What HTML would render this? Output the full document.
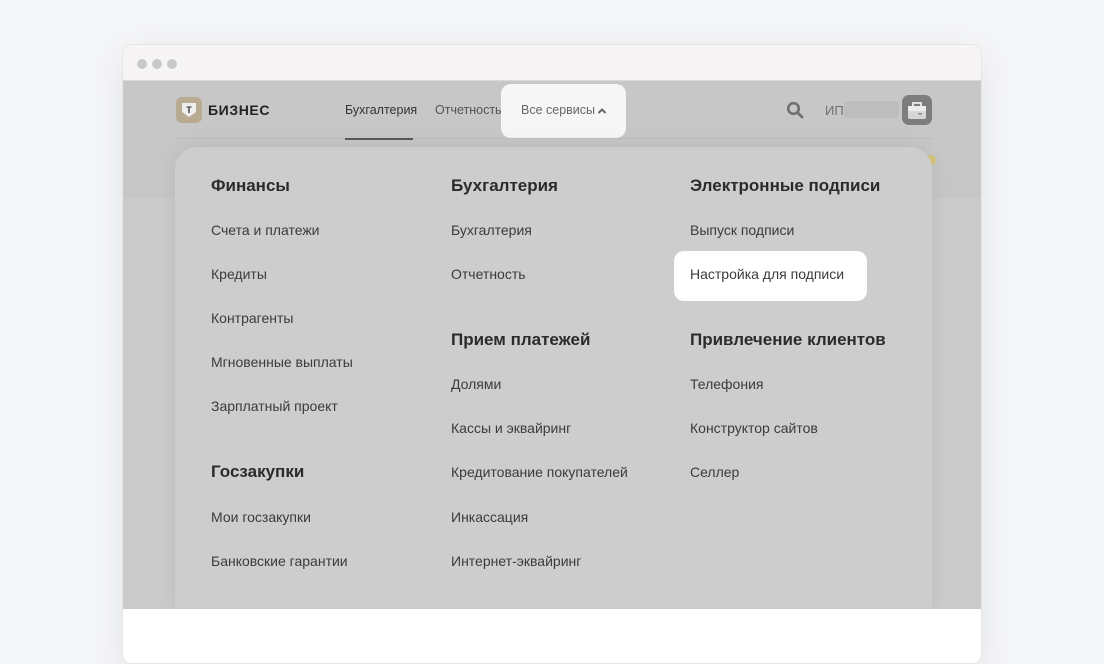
<!DOCTYPE html>
<html><head><meta charset="utf-8">
<style>
*{margin:0;padding:0;box-sizing:border-box}
body{width:1104px;height:652px;background:#f5f6f8;position:relative;overflow:hidden;font-family:"Liberation Sans","Noto Sans CJK SC",sans-serif}
.win{position:absolute;left:122px;top:44px;width:860px;height:620px;border-radius:10px;background:#fff;border:1px solid #e6e6e8;box-shadow:0 10px 40px rgba(0,0,0,.08);overflow:hidden}
.bar{position:absolute;left:0;top:0;width:100%;height:36px;background:#f6f4f4;border-bottom:1px solid #d8d8d8}
.dot{position:absolute;top:14px;width:10px;height:10px;border-radius:50%;background:#c9c9c9}
.gray{position:absolute;left:0;top:36px;width:100%;height:528px;background:#cbcbcb;overflow:hidden}
.hdr{position:absolute;left:0;top:0;width:100%;height:117px;background:#c6c7c6}
.line{position:absolute;left:52px;top:57px;width:757px;height:1px;background:#bdbdbd}
.a{position:absolute;white-space:nowrap}
.panel{position:absolute;left:52px;top:66px;width:757px;height:462px;background:#cdcdcd;border-radius:22px 22px 0 0;box-shadow:0 0 20px rgba(0,0,0,.08)}
.t{position:absolute;left:-1px;top:-2px;width:100%;height:100%}
.h{position:absolute;font-size:17px;font-weight:bold;color:#2b2b2b;white-space:nowrap}
.i{position:absolute;font-size:14px;color:#3b3b3b;white-space:nowrap}
</style></head><body>
<div class="win">
 <div class="bar"><div class="dot" style="left:14px"></div><div class="dot" style="left:29px"></div><div class="dot" style="left:44px"></div></div>
 <div class="gray">
  <div class="hdr"></div>
  <div class="line"></div>
  <div class="a" style="left:222px;top:57px;width:68px;height:2px;background:#5a5a5a"></div>
  <div class="a" style="left:53px;top:16px;width:26px;height:26px;border-radius:6px;background:#b8ab91"></div>
  <svg class="a" style="left:57px;top:20px" width="18" height="18" viewBox="0 0 18 18"><path d="M2 2h14v9l-7 5-7-5z" fill="#eeeeee"/><text x="9" y="12" font-size="9" font-weight="bold" text-anchor="middle" fill="#333" font-family="Liberation Sans">T</text></svg>
  <div class="a" style="left:85px;top:21px;font-size:14px;font-weight:900;color:#222;letter-spacing:.6px">БИЗНЕС</div>
  <div class="a" style="left:222px;top:22px;font-size:12.5px;color:#333">Бухгалтерия</div>
  <div class="a" style="left:312px;top:22px;font-size:12.5px;color:#555">Отчетность</div>
  <div class="a" style="left:378px;top:3px;width:125px;height:54px;border-radius:10px;background:#f6f6f7"></div>
  <div class="a" style="left:398px;top:22px;font-size:12.5px;color:#666">Все сервисы</div>
  <svg class="a" style="left:474px;top:26px" width="10" height="8" viewBox="0 0 10 8"><path d="M1.5 6L5 2.5 8.5 6" stroke="#666" stroke-width="2" fill="none"/></svg>
  <svg class="a" style="left:663px;top:20px" width="18" height="18" viewBox="0 0 18 18"><circle cx="7.5" cy="7.5" r="5.3" stroke="#707070" stroke-width="2.6" fill="none"/><path d="M11.5 11.5L16 16" stroke="#707070" stroke-width="2.8" stroke-linecap="round"/></svg>
  <div class="a" style="left:702px;top:22px;font-size:13px;color:#707070">ИП</div>
  <div class="a" style="left:721px;top:20px;width:55px;height:17px;border-radius:4px;background:#bdbdbe"></div>
  <div class="a" style="left:779px;top:14px;width:30px;height:30px;border-radius:7px;background:#7d7d7d"></div>
  <svg class="a" style="left:783px;top:18px" width="22" height="22" viewBox="0 0 22 22"><path d="M7 7V4h8v3" stroke="#e0e0e0" stroke-width="2" fill="none"/><rect x="2" y="7" width="18" height="13" rx="2" fill="#d6d6d6"/><rect x="2" y="7" width="18" height="5" fill="#ececec"/><rect x="12" y="14" width="4" height="1.5" fill="#8a8a8a"/></svg>
  <div class="a" style="left:803px;top:74px;width:10px;height:10px;border-radius:50%;background:#d8c77a"></div>
  <div class="panel">
   <div class="a" style="left:499px;top:104px;width:193px;height:50px;border-radius:10px;background:#fff"></div>
   <div class="t">
   <div class="h" style="left:37px;top:31px">Финансы</div>
   <div class="i" style="left:37px;top:77px">Счета и платежи</div>
   <div class="i" style="left:37px;top:121px">Кредиты</div>
   <div class="i" style="left:37px;top:165px">Контрагенты</div>
   <div class="i" style="left:37px;top:209px">Мгновенные выплаты</div>
   <div class="i" style="left:37px;top:253px">Зарплатный проект</div>
   <div class="h" style="left:37px;top:317px">Госзакупки</div>
   <div class="i" style="left:37px;top:364px">Мои госзакупки</div>
   <div class="i" style="left:37px;top:408px">Банковские гарантии</div>

   <div class="h" style="left:277px;top:31px">Бухгалтерия</div>
   <div class="i" style="left:277px;top:77px">Бухгалтерия</div>
   <div class="i" style="left:277px;top:121px">Отчетность</div>
   <div class="h" style="left:277px;top:185px">Прием платежей</div>
   <div class="i" style="left:277px;top:231px">Долями</div>
   <div class="i" style="left:277px;top:275px">Кассы и эквайринг</div>
   <div class="i" style="left:277px;top:319px">Кредитование покупателей</div>
   <div class="i" style="left:277px;top:364px">Инкассация</div>
   <div class="i" style="left:277px;top:408px">Интернет-эквайринг</div>

   <div class="h" style="left:516px;top:31px">Электронные подписи</div>
   <div class="i" style="left:516px;top:77px">Выпуск подписи</div>
   <div class="i" style="left:516px;top:121px">Настройка для подписи</div>
   <div class="h" style="left:516px;top:185px">Привлечение клиентов</div>
   <div class="i" style="left:516px;top:231px">Телефония</div>
   <div class="i" style="left:516px;top:275px">Конструктор сайтов</div>
   <div class="i" style="left:516px;top:319px">Селлер</div>
   </div>
  </div>
 </div>
</div>
</body></html>
